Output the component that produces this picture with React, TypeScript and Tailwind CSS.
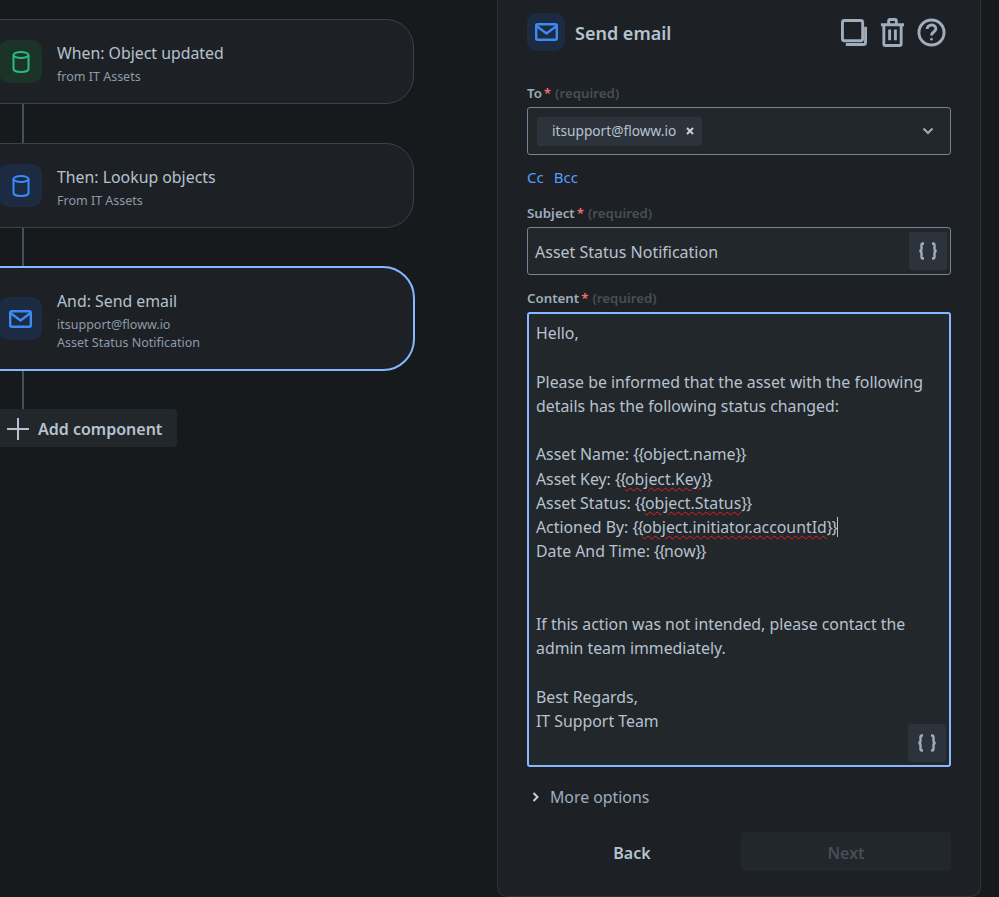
import React from "react";

const Cylinder = ({ c }: { c: string }) => (
  <svg width="18" height="24" viewBox="0 0 18 24" fill="none" stroke={c} strokeWidth="2">
    <ellipse cx="9" cy="5" rx="7.5" ry="3" />
    <path d="M1.5 5v14c0 1.7 3.4 3 7.5 3s7.5-1.300 7.500-3V5" />
  </svg>
);

const Mail = () => (
  <svg width="23" height="18" viewBox="0 0 23 18" fill="none" stroke="#3d8bf2" strokeWidth="2.400">
    <rect x="1.200" y="1.200" width="20.600" height="15.600" rx="1.500" />
    <path d="M1.500 3l10 7.500 10-7.500" />
  </svg>
);

const Braces = () => (
  <svg width="20" height="18" viewBox="0 0 20 18" fill="none" stroke="#9fadbc" strokeWidth="2.400">
    <path d="M6 1.500H5C3.800 1.500 3.500 2.200 3.500 3.200v3.600C3.500 8 3 8.800 1.500 9c1.500.2 2 1 2 2.200v3.600c0 1 .3 1.700 1.500 1.700h1" />
    <path d="M14 1.500h1c1.200 0 1.500.7 1.500 1.700v3.600c0 1.200.5 2 2 2.200-1.500.2-2 1-2 2.200v3.600c0 1-.3 1.700-1.500 1.700h-1" />
  </svg>
);

const Card = ({
  icon,
  tint,
  title,
  subs,
  active,
}: {
  icon: React.ReactNode;
  tint: string;
  title: string;
  subs: string[];
  active?: boolean;
}) => (
  <div
    className={
      active
        ? "ml-[-30px] w-[445px] h-[105px] rounded-[32px] border-2 border-[#85b8ff] bg-[#1d2125] flex items-center pl-[27px] gap-[15px]"
        : "ml-[-30px] w-[444px] h-[85px] rounded-[28px] border border-[#3a424a] bg-[#1d2125] flex items-center pl-[28px] gap-[15px]"
    }
  >
    <div className={`w-[43px] h-[43px] rounded-[10px] flex items-center justify-center shrink-0 ${tint}`}>{icon}</div>
    <div className="flex flex-col pt-[4px]">
      <div className="text-[15.850px] leading-[24px] mb-[3px] text-[#b6c2cf]">{title}</div>
      {subs.map((s) => (
        <div key={s} className="text-[12.500px] leading-[18px] text-[#8c9bab]">
          {s}
        </div>
      ))}
    </div>
  </div>
);

const Connector = ({ h }: { h: string }) => <div className={`ml-[22px] w-[2px] bg-[#454f59] ${h}`} />;

const Label = ({ name }: { name: string }) => (
  <div className="text-[13.300px] leading-[18px] font-semibold text-[#9fadbc]">
    {name}
    <span className="text-[#f87168] ml-[2px]">*</span>
    <span className="text-[#454f59] ml-[4px]">(required)</span>
  </div>
);

const Wavy = ({ children }: { children: React.ReactNode }) => (
  <span className="underline decoration-wavy decoration-[#f01c1c] decoration-1 underline-offset-[2px]">{children}</span>
);

const B = ({ children }: { children: React.ReactNode }) => <span className="tracking-[-1px]">{children}</span>;

export default function App() {
  return (
    <div
      className="w-[999px] h-[897px] overflow-hidden bg-[#161a1d] flex"
      style={{ fontFamily: '"Noto Sans", "Open Sans", sans-serif' }}
    >
      <div className="w-[497px] shrink-0 pt-[19px] flex flex-col items-start">
        <Card
          tint="bg-[#1c3329]"
          icon={<Cylinder c="#2abb7f" />}
          title="When: Object updated"
          subs={["from IT Assets"]}
        />
        <Connector h="h-[39px]" />
        <Card
          tint="bg-[#1c2b41]"
          icon={<Cylinder c="#388bff" />}
          title="Then: Lookup objects"
          subs={["From IT Assets"]}
        />
        <Connector h="h-[38px]" />
        <Card
          active
          tint="bg-[#1c2b41]"
          icon={<Mail />}
          title="And: Send email"
          subs={["itsupport@floww.io", "Asset Status Notification"]}
        />
        <Connector h="h-[38px]" />
        <button className="h-[38px] w-[177px] pt-[1px] rounded-r-[3px] bg-[#22272b] flex items-center pl-[7px] gap-[9px] text-[16px] font-semibold text-[#b6c2cf]">
          <svg width="22" height="22" viewBox="0 0 22 22" stroke="#b6c2cf" strokeWidth="2">
            <path d="M11 0v22M0 11h22" />
          </svg>
          Add component
        </button>
      </div>

      <div className="w-[484px] shrink-0 h-[897px] border-x border-b border-[#2c333a] rounded-b-[10px] bg-[#1d2125] px-[29px] pt-[13px]">
        <div className="flex items-center h-[38px]">
          <div className="w-[38px] h-[38px] rounded-[10px] bg-[#1c2b41] flex items-center justify-center">
            <Mail />
          </div>
          <div className="ml-[10px] mt-[3px] text-[18px] font-semibold text-[#b6c2cf]">Send email</div>
          <div className="ml-auto mr-[5px] flex items-center gap-[12px]">
            <svg className="mr-[1px]" width="26" height="27" viewBox="0 0 27 28" fill="none" stroke="#9fadbc" strokeWidth="3">
              <rect x="1.500" y="1.500" width="21" height="21" rx="2" />
              <path d="M25.500 8v16a2.500 2.500 0 0 1-2.500 2.500H5" />
            </svg>
            <svg width="25" height="29" viewBox="0 0 26 30" fill="none" stroke="#9fadbc" strokeWidth="3">
              <path d="M1 7h24M4 7v20a1.500 1.500 0 0 0 1.500 1.500h15A1.500 1.500 0 0 0 22 27V7M9 6V3a1.500 1.500 0 0 1 1.500-1.500h5A1.500 1.500 0 0 1 17 3v3M10 12v11M16 12v11" />
            </svg>
            <svg width="29" height="29" viewBox="0 0 30 30" fill="none" stroke="#9fadbc" strokeWidth="3">
              <circle cx="15" cy="15" r="13" />
              <path d="M10.500 11.500c0-5.500 9-5.500 9-.5 0 3.500-4.500 3.500-4.500 7" />
              <circle cx="15" cy="22" r="1" fill="#9fadbc" strokeWidth="1" />
            </svg>
          </div>
        </div>

        <div className="mt-[33px]">
          <Label name="To" />
        </div>
        <div className="mt-[5px] h-[48px] rounded-[3px] border border-[#738496] bg-[#22272b] flex items-center pl-[9px] pr-[16px]">
          <div className="h-[29px] w-[165px] bg-[#2c333a] rounded-[3px] flex items-center pl-[15px] text-[13.700px] text-[#b6c2cf]">
            itsupport@floww.io
            <svg className="ml-[10px]" width="8" height="8" viewBox="0 0 8 8" stroke="#c7d1db" strokeWidth="2">
              <path d="M1 1l6 6M7 1l-6 6" />
            </svg>
          </div>
          <svg className="ml-auto" width="12" height="8" viewBox="0 0 12 8" fill="none" stroke="#9fadbc" strokeWidth="2">
            <path d="M1.500 1.500L6 6l4.500-4.500" />
          </svg>
        </div>
        <div className="mt-[10px] flex gap-[10px] text-[15px] leading-[24px] text-[#579dff]">
          <span>Cc</span>
          <span>Bcc</span>
        </div>

        <div className="mt-[15px]">
          <Label name="Subject" />
        </div>
        <div className="mt-[5px] h-[48px] rounded-[3px] border border-[#738496] bg-[#22272b] flex items-center pl-[7px] pr-[3px] text-[16px] text-[#b6c2cf]">
          <span className="mt-[2px]">Asset Status Notification</span>
          <div className="ml-auto w-[38px] h-[38px] rounded-[3px] bg-[#2c333a] flex items-center justify-center">
            <Braces />
          </div>
        </div>

        <div className="mt-[14px]">
          <Label name="Content" />
        </div>
        <div className="relative mt-[5px] h-[455px] rounded-[3px] border-2 border-[#85b8ff] bg-[#22272b] pl-[7px] pt-[7px] text-[15.850px] leading-[24.250px] text-[#b6c2cf]">
          <div>Hello,</div>
          <div>&nbsp;</div>
          <div>Please be informed that the asset with the following</div>
          <div>details has the following status changed:</div>
          <div>&nbsp;</div>
          <div>
            Asset Name: <B>{"{{"}</B>object.name<B>{"}}"}</B>
          </div>
          <div>
            Asset Key: <B>{"{{"}</B>
            <Wavy>object.Key</Wavy>
            <B>{"}}"}</B>
          </div>
          <div>
            Asset Status: <B>{"{{"}</B>
            <Wavy>object.Status</Wavy>
            <B>{"}}"}</B>
          </div>
          <div className="flex">
            <span>
              Actioned By: <B>{"{{"}</B>
              <Wavy>object.initiator.accountId</Wavy>
              <B>{"}}"}</B>
            </span>
            <span className="w-px h-[20px] mt-[2px] bg-[#b6c2cf]" />
          </div>
          <div>
            Date And Time: <B>{"{{"}</B>now<B>{"}}"}</B>
          </div>
          <div>&nbsp;</div>
          <div>&nbsp;</div>
          <div>If this action was not intended, please contact the</div>
          <div>admin team immediately.</div>
          <div>&nbsp;</div>
          <div>Best Regards,</div>
          <div>IT Support Team</div>
          <div className="absolute right-[3px] bottom-[3px] w-[38px] h-[38px] rounded-[3px] bg-[#2c333a] flex items-center justify-center">
            <Braces />
          </div>
        </div>

        <div className="mt-[18px] ml-[5px] flex items-center gap-[11px] text-[15.850px] leading-[24px] text-[#9fadbc]">
          <svg width="7" height="10" viewBox="0 0 7 10" fill="none" stroke="#c7d1db" strokeWidth="2">
            <path d="M1.500 1L5.500 5l-4 4" />
          </svg>
          More options
        </div>

        <div className="mt-[23px] flex">
          <button className="w-[210px] h-[39px] pt-[3px] text-[16px] font-semibold text-[#b6c2cf]">Back</button>
          <button className="ml-auto w-[210px] h-[39px] pt-[3px] rounded-[3px] bg-[#22272b] text-[16px] font-semibold text-[#454f59]">
            Next
          </button>
        </div>
      </div>
    </div>
  );
}
